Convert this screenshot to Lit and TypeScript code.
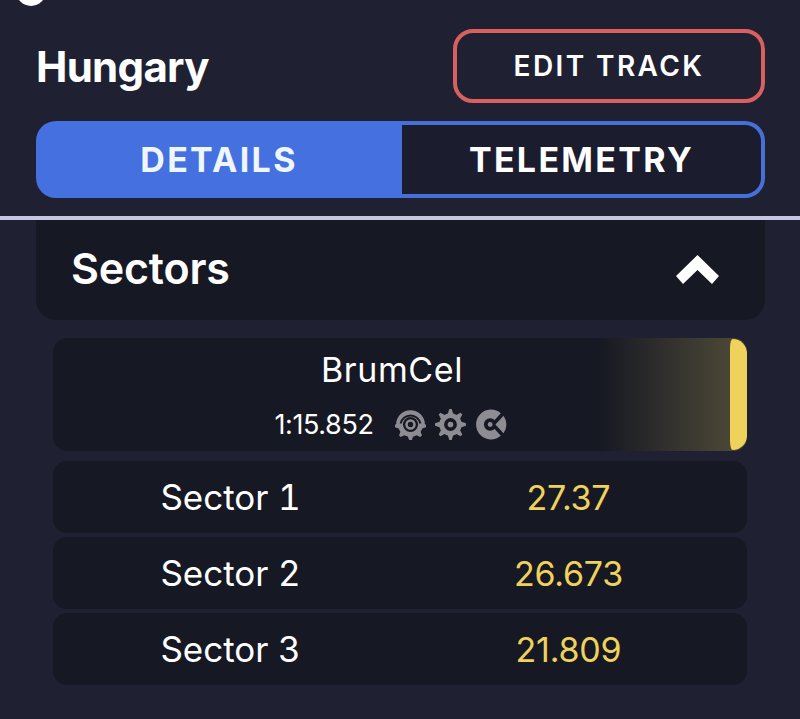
import { LitElement, css, html, svg } from 'lit';
import { customElement } from 'lit/decorators.js';

const ICON = '#8c8c92';
const HOLE = '#161823';

// toothed outline around (16,16); teeth only between the given angles (degrees, 0 = up, clockwise)
function gearPath(teeth: number, from: number, to: number, inner: number, outer: number) {
  const pts: string[] = [];
  const step = (to - from) / teeth;
  const pt = (deg: number, r: number) => {
    const a = ((deg - 90) * Math.PI) / 180;
    return `${(16 + r * Math.cos(a)).toFixed(2)} ${(16 + r * Math.sin(a)).toFixed(2)}`;
  };
  for (let i = 0; i < teeth; i++) {
    const c = from + step * (i + 0.5);
    const w = step * 0.2;
    pts.push(pt(c - step / 2, inner), pt(c - w * 1.5, inner), pt(c - w * 0.5, outer), pt(c + w * 0.5, outer), pt(c + w * 1.5, inner));
  }
  return `M${pts.join('L')}Z`;
}

const circleGearIcon = svg`
  <path fill=${ICON} d=${gearPath(5, 75, 285, 12.8, 16.4) + 'M1.2 16a14.8 14.8 0 0 1 29.6 0L28.8 19.4H3.2Z'} />
  <path fill="none" stroke=${HOLE} stroke-width="2" d="M5.8 15a10.4 10.4 0 0 1 20.4 0" />
  <circle cx="16" cy="16" r="7.8" fill=${HOLE} />
  <circle cx="16" cy="16" r="4.1" fill="none" stroke=${ICON} stroke-width="2.6" />
`;

const gearIcon = svg`
  <path fill=${ICON} d=${gearPath(8, -22.5, 337.5, 11.6, 16)} />
  <circle cx="16" cy="16" r="6.6" fill=${HOLE} />
  <circle cx="16" cy="16" r="2.9" fill=${ICON} />
`;

const wedgeIcon = svg`
  <path fill=${ICON} d="M15 16L25.6 4.4A15.4 15.4 0 1 0 25.6 27.6Z" />
  <circle cx="14.6" cy="16" r="6.4" fill=${HOLE} />
  <path fill=${ICON} d="M20 16L28.4 6.9A15.4 15.4 0 0 1 28.4 25.1Z" />
  <circle cx="14.6" cy="16" r="2.5" fill=${ICON} />
`;

const sectors = [
  { name: 'Sector 1', time: '27.37' },
  { name: 'Sector 2', time: '26.673' },
  { name: 'Sector 3', time: '21.809' },
];

@customElement('app-root')
export class AppRoot extends LitElement {
  static override styles = css`
    :host {
      display: block;
      height: 719px;
      overflow: hidden;
      background: #1f2133;
      color: #fff;
      font-family: 'Inter', sans-serif;
    }

    .status {
      height: 7px;
      padding-left: 16px;
      overflow: hidden;
    }

    .status-dot {
      width: 30px;
      height: 30px;
      margin-top: -24px;
      border-radius: 50%;
      background: #fff;
    }

    .head {
      display: flex;
      align-items: center;
      justify-content: space-between;
      margin: 22px 35px 0 36px;
    }

    h1 {
      margin: 0;
      font-size: 42px;
      font-weight: 700;
      letter-spacing: -0.7px;
    }

    .edit {
      box-sizing: border-box;
      width: 312px;
      height: 74px;
      display: flex;
      align-items: center;
      justify-content: center;
      border: 4px solid #d9605f;
      border-radius: 20px;
      font-size: 28px;
      font-weight: 600;
      letter-spacing: 2.4px;
    }

    .tabs {
      display: grid;
      grid-template-columns: 366px 1fr;
      height: 77px;
      margin: 18px 35px 0 36px;
      font-size: 34px;
      font-weight: 700;
      letter-spacing: 2.3px;
    }

    .tab {
      box-sizing: border-box;
      display: flex;
      align-items: center;
      justify-content: center;
    }

    .tab.active {
      background: #4570df;
      border-radius: 20px 0 0 20px;
      color: #eef6ff;
    }

    .tab.idle {
      background: #1b1c2e;
      border: 4px solid #4570d8;
      border-left: 0;
      border-radius: 0 20px 20px 0;
    }

    .rule {
      height: 4px;
      margin-top: 18px;
      background: #c6c6e0;
    }

    .panel {
      display: flex;
      align-items: center;
      justify-content: space-between;
      height: 100px;
      margin: 0 35px 0 36px;
      padding: 0 44px 0 35px;
      background: #161823;
      border-radius: 0 0 20px 20px;
    }

    h2 {
      margin: 0 0 4px;
      font-size: 43px;
      font-weight: 600;
      letter-spacing: -0.2px;
    }

    .chevron {
      display: block;
      width: 46px;
      height: 30px;
    }

    .list {
      display: flex;
      flex-direction: column;
      gap: 4px;
      margin: 18px 53px 0;
    }

    .driver {
      position: relative;
      box-sizing: border-box;
      height: 113px;
      margin-bottom: 6px;
      padding-right: 16px;
      display: flex;
      flex-direction: column;
      align-items: center;
      overflow: hidden;
      background: linear-gradient(90deg, #161823 545px, #4a4636 677px);
      border-radius: 14px;
    }

    .driver::after {
      content: '';
      position: absolute;
      top: 1px;
      bottom: 1px;
      right: 0;
      width: 17px;
      background: #eed25c;
      border-radius: 3px 16px 16px 3px / 10px 16px 16px 10px;
    }

    .driver-name {
      margin-top: 12px;
      font-size: 34px;
      line-height: 40px;
      font-weight: 400;
      letter-spacing: 0.6px;
    }

    .driver-line {
      display: flex;
      align-items: center;
      margin: 18px 3px 0 0;
      font-size: 27px;
      font-weight: 400;
      letter-spacing: -0.4px;
    }

    .icons {
      display: flex;
      gap: 9.5px;
      margin-left: 21px;
    }

    .icons svg {
      display: block;
      width: 31px;
      height: 31px;
    }

    .row {
      display: grid;
      grid-template-columns: 339px 337px;
      align-items: center;
      height: 72px;
      padding-left: 8px;
      background: #161823;
      border-radius: 14px;
      font-size: 35px;
      font-feature-settings: 'tnum';
      text-align: center;
    }

    .time {
      color: #eed25c;
      font-size: 34px;
      font-feature-settings: normal;
      letter-spacing: -0.2px;
    }
  `;

  override render() {
    return html`
      <div class="status"><div class="status-dot"></div></div>
      <div class="head">
        <h1>Hungary</h1>
        <div class="edit">EDIT TRACK</div>
      </div>
      <div class="tabs">
        <div class="tab active">DETAILS</div>
        <div class="tab idle">TELEMETRY</div>
      </div>
      <div class="rule"></div>
      <div class="panel">
        <h2>Sectors</h2>
        <svg class="chevron" viewBox="0 0 46 30">
          <path fill="#fff" d="M22.5 0L44 21L37 29L22.5 15L8 29L1 21Z" />
        </svg>
      </div>
      <div class="list">
        <div class="driver">
          <div class="driver-name">BrumCel</div>
          <div class="driver-line">
            <span>1:15.852</span>
            <div class="icons">
              <svg viewBox="0 0 32 32">${circleGearIcon}</svg>
              <svg viewBox="0 0 32 32">${gearIcon}</svg>
              <svg viewBox="0 0 32 32">${wedgeIcon}</svg>
            </div>
          </div>
        </div>
        ${sectors.map(
          (s) => html`
            <div class="row">
              <span>${s.name}</span>
              <span class="time">${s.time}</span>
            </div>
          `,
        )}
      </div>
    `;
  }
}

declare global {
  interface HTMLElementTagNameMap {
    'app-root': AppRoot;
  }
}
